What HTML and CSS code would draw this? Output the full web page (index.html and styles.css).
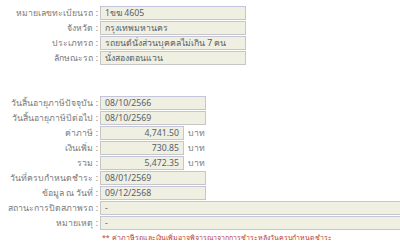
FILE: index.html
```html
<!DOCTYPE html>
<html lang="th">
<head>
<meta charset="utf-8">
<link rel="stylesheet" href="styles.css">
</head>
<body>
<div class="form">
  <div class="section">
    <div class="row"><span class="label">หมายเลขทะเบียนรถ :</span><span class="field wide">1ขฆ 4605</span></div>
    <div class="row"><span class="label">จังหวัด :</span><span class="field wide">กรุงเทพมหานคร</span></div>
    <div class="row"><span class="label">ประเภทรถ :</span><span class="field wide">รถยนต์นั่งส่วนบุคคลไม่เกิน 7 คน</span></div>
    <div class="row"><span class="label">ลักษณะรถ :</span><span class="field wide">นั่งสองตอนแวน</span></div>
  </div>
  <div class="section lower">
    <div class="row"><span class="label">วันสิ้นอายุภาษีปัจจุบัน :</span><span class="field date">08/10/2566</span></div>
    <div class="row"><span class="label">วันสิ้นอายุภาษีปีต่อไป :</span><span class="field date">08/10/2569</span></div>
    <div class="row"><span class="label">ค่าภาษี :</span><span class="field money">4,741.50</span><span class="unit">บาท</span></div>
    <div class="row"><span class="label">เงินเพิ่ม :</span><span class="field money">730.85</span><span class="unit">บาท</span></div>
    <div class="row"><span class="label">รวม :</span><span class="field money">5,472.35</span><span class="unit">บาท</span></div>
    <div class="row"><span class="label">วันที่ครบกำหนดชำระ :</span><span class="field date">08/01/2569</span></div>
    <div class="row"><span class="label">ข้อมูล ณ วันที่ :</span><span class="field date">09/12/2568</span></div>
    <div class="row"><span class="label">สถานะการปิดสภาพรถ :</span><span class="field full">-</span></div>
    <div class="row"><span class="label">หมายเหตุ :</span><span class="field full">-</span></div>
    <div class="row"><span class="label"></span><span class="note">** ค่าภาษีรถและเงินเพิ่มอาจพิจารณาจากการชำระหลังวันครบกำหนดชำระ</span></div>
  </div>
</div>
</body>
</html>
```

FILE: styles.css
```css
html, body {
  margin: 0;
  padding: 0;
  background: #ffffff;
}
body {
  font-family: Tahoma, "Noto Sans", sans-serif;
  font-size: 8.7px;
  color: #666666;
  overflow: hidden;
}
.form {
  width: 400px;
  overflow: hidden;
}
.section {
  display: flex;
  flex-direction: column;
  padding-top: 5px;
}
.section.lower {
  padding-top: 30px;
}
.row {
  display: flex;
  align-items: center;
  height: 15px;
  white-space: nowrap;
}
.label {
  flex: 0 0 100px;
  text-align: right;
  padding-right: 2px;
  box-sizing: border-box;
  color: #7a7a7a;
}
.field {
  box-sizing: border-box;
  height: 14px;
  line-height: 12px;
  padding: 0 4px;
  background: #efefe2;
  border: 1px solid #c6c6c6;
  border-top-color: #c4c4dc;
  color: #58606a;
  overflow: hidden;
  flex: 0 0 auto;
}
.wide { width: 146px; }
.date { width: 106px; }
.money { width: 84px; text-align: right; }
.full { width: 310px; }
.unit {
  padding-left: 4px;
  color: #7a7a7a;
}
.note {
  color: #b8392f;
  font-size: 7px;
  padding-left: 2px;
}
```
